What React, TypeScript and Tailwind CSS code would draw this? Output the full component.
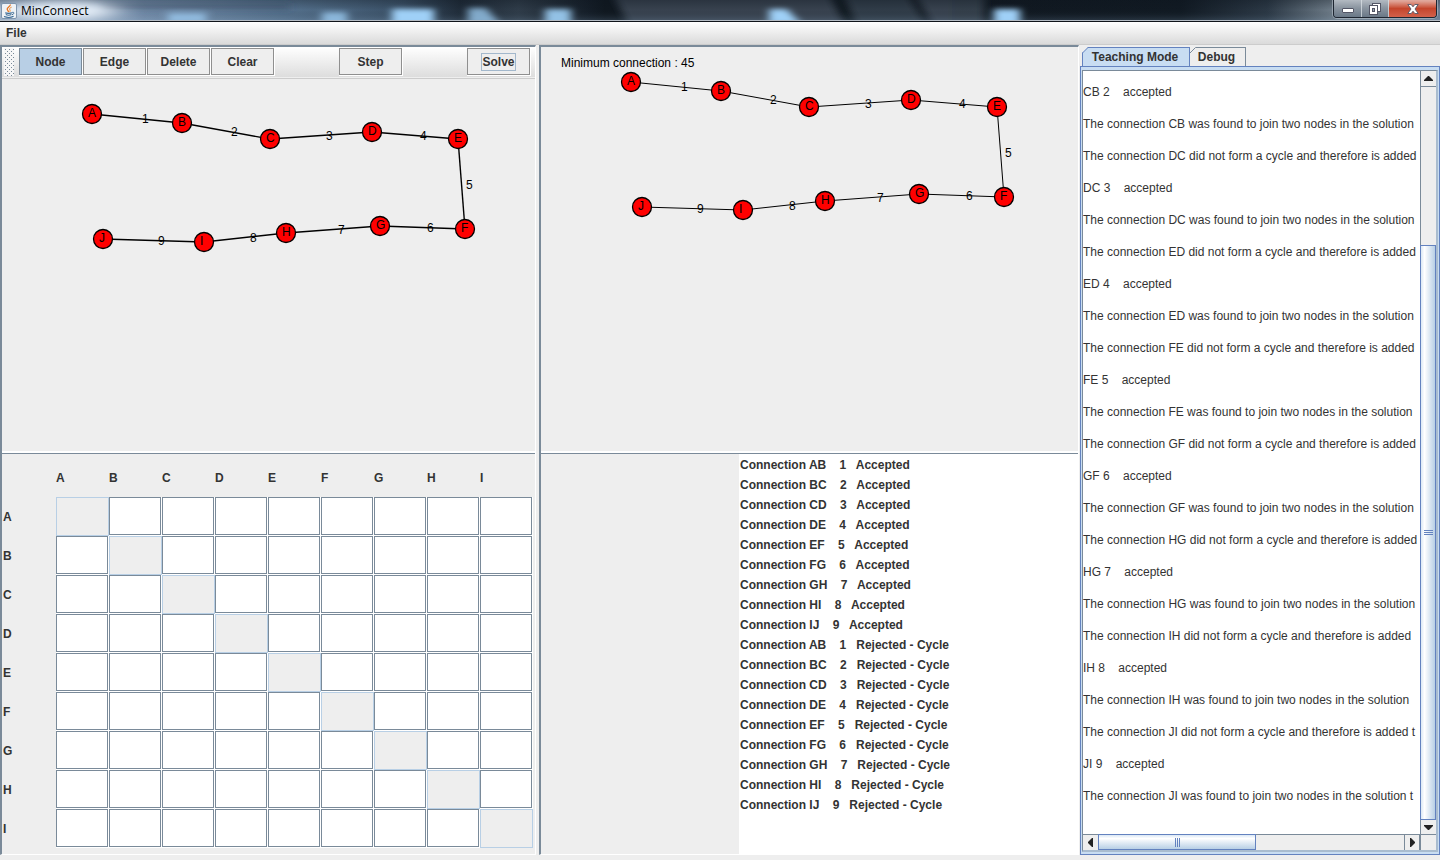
import React from "react";

type Point = { id: string; x: number; y: number };

const NODES: Point[] = [
  { id: "A", x: 92, y: 114 },
  { id: "B", x: 182, y: 123 },
  { id: "C", x: 270, y: 139 },
  { id: "D", x: 372, y: 132 },
  { id: "E", x: 458, y: 139 },
  { id: "F", x: 465, y: 229 },
  { id: "G", x: 380, y: 226 },
  { id: "H", x: 286, y: 233 },
  { id: "I", x: 204, y: 242 },
  { id: "J", x: 103, y: 239 },
];

const COLUMNS = ["A", "B", "C", "D", "E", "F", "G", "H", "I"];
const PAIRS = ["AB", "BC", "CD", "DE", "EF", "FG", "GH", "HI", "IJ"];

const RESULTS = [
  ...PAIRS.map((p, i) => ({ pair: p, weight: i + 1, status: "Accepted" })),
  ...PAIRS.map((p, i) => ({ pair: p, weight: i + 1, status: "Rejected - Cycle" })),
];

const LOG: string[] = [
  "CB 2    accepted",
  "The connection CB was found to join two nodes in the solution",
  "The connection DC did not form a cycle and therefore is added",
  "DC 3    accepted",
  "The connection DC was found to join two nodes in the solution",
  "The connection ED did not form a cycle and therefore is added",
  "ED 4    accepted",
  "The connection ED was found to join two nodes in the solution",
  "The connection FE did not form a cycle and therefore is added",
  "FE 5    accepted",
  "The connection FE was found to join two nodes in the solution",
  "The connection GF did not form a cycle and therefore is added",
  "GF 6    accepted",
  "The connection GF was found to join two nodes in the solution",
  "The connection HG did not form a cycle and therefore is added",
  "HG 7    accepted",
  "The connection HG was found to join two nodes in the solution",
  "The connection IH did not form a cycle and therefore is added",
  "IH 8    accepted",
  "The connection IH was found to join two nodes in the solution",
  "The connection JI did not form a cycle and therefore is added t",
  "JI 9    accepted",
  "The connection JI was found to join two nodes in the solution t",
];

function Graph({ dx, dy, bold, label }: { dx: number; dy: number; bold?: boolean; label: string }) {
  return (
    <svg
      className="block h-full w-full overflow-hidden"
      role="img"
      aria-label={label}
      fontFamily="'Liberation Sans', Arial, sans-serif"
      fontSize="12"
    >
      <g transform={`translate(${dx} ${dy})`}>
        {NODES.slice(1).map((n, i) => (
          <line
            key={n.id}
            x1={NODES[i].x}
            y1={NODES[i].y}
            x2={n.x}
            y2={n.y}
            stroke="#000"
            strokeWidth={bold ? 1.4 : 1}
          />
        ))}
        {NODES.slice(1).map((n, i) => (
          <text key={n.id} x={Math.floor((NODES[i].x + n.x) / 2) + 5} y={Math.floor((NODES[i].y + n.y) / 2) + 5}>
            {i + 1}
          </text>
        ))}
        {NODES.map((n) => (
          <g key={n.id}>
            <circle cx={n.x} cy={n.y} r="9.5" fill="#f00" stroke="#000" strokeWidth="1.3" />
            <text x={n.x - 4} y={n.y + 3}>
              {n.id}
            </text>
          </g>
        ))}
      </g>
    </svg>
  );
}

function TitleGlass() {
  return (
    <svg
      className="absolute inset-0 h-full w-full"
      viewBox="0 0 1440 20"
      preserveAspectRatio="none"
      aria-hidden="true"
    >
      <defs>
        <linearGradient id="glass" x1="0" x2="1" y1="0" y2="0">
          <stop offset="0" stopColor="#9db2ca" />
          <stop offset="0.06" stopColor="#a3b7ce" />
          <stop offset="0.1" stopColor="#7690ae" />
          <stop offset="0.2" stopColor="#54708c" />
          <stop offset="0.28" stopColor="#3a5066" />
          <stop offset="0.32" stopColor="#1f2b38" />
          <stop offset="0.36" stopColor="#2f3c49" />
          <stop offset="0.41" stopColor="#141d27" />
          <stop offset="0.42" stopColor="#101820" />
          <stop offset="0.59" stopColor="#10181f" />
          <stop offset="0.595" stopColor="#10171f" />
          <stop offset="0.82" stopColor="#111a23" />
          <stop offset="0.88" stopColor="#2b3845" />
          <stop offset="0.93" stopColor="#75838f" />
          <stop offset="1" stopColor="#6c8095" />
        </linearGradient>
        <linearGradient id="sheen" x1="0" x2="0" y1="0" y2="1">
          <stop offset="0" stopColor="#0c141d" stopOpacity="0.3" />
          <stop offset="0.5" stopColor="#0c141d" stopOpacity="0" />
          <stop offset="1" stopColor="#7d9ab5" stopOpacity="0.2" />
        </linearGradient>
        <filter id="soft" x="-10%" y="-50%" width="120%" height="200%">
          <feGaussianBlur stdDeviation="4 2.5" />
        </filter>
        <filter id="glow" x="-50%" y="-100%" width="200%" height="300%">
          <feGaussianBlur stdDeviation="14 4" />
        </filter>
      </defs>
      <rect width="1440" height="20" fill="url(#glass)" />
      <g filter="url(#soft)" fill="#37434f">
        <path d="M612 -8H828L846 28H630Z" />
        <path d="M842 -8H906L928 28H858Z" opacity="0.85" />
        <path d="M914 -8H952V28H934Z" />
        <path d="M952 -8H984L984 28H944Z" opacity="0.9" />
      </g>
      <rect width="1440" height="20" fill="url(#sheen)" />
      <g filter="url(#soft)" fill="#9fd0f7">
        <rect x="100" y="3" width="190" height="8" fill="#31465c" opacity="0.35" />
        <rect x="168" y="13" width="38" height="10" opacity="0.7" />
        <rect x="322" y="12" width="25" height="14" opacity="0.75" />
        <rect x="392" y="9" width="42" height="16" />
        <path d="M468 8H486L500 24H468Z" opacity="0.75" />
        <rect x="545" y="9" width="26" height="16" opacity="0.9" />
        <path d="M769 9H787L801 24H769Z" />
        <rect x="994" y="9" width="26" height="16" />
      </g>
      <ellipse cx="60" cy="11" rx="56" ry="9" fill="#e4edf7" filter="url(#glow)" />
    </svg>
  );
}

function TitleBar() {
  return (
    <header className="relative flex h-[22px] shrink-0 items-start justify-between overflow-hidden border-b border-[#11151b] bg-[#b5bcc4]">
      <div className="absolute inset-x-0 top-0 h-5">
        <TitleGlass />
      </div>
      <div className="relative flex h-[22px] items-center gap-1 pl-px">
        <svg className="h-4 w-4" viewBox="0 0 16 16" aria-hidden="true">
          <rect x="0.5" y="0.5" width="15" height="15" rx="1.5" fill="#eef2f6" stroke="#7f95ad" />
          <path d="M9.3 1.5C9.8 3.6 5.8 4.4 6.2 6.2C6.4 7.3 7.7 8 7.4 9.2" fill="none" stroke="#e8731c" strokeWidth="1.3" />
          <path d="M10.6 4.2C8.6 5 8.2 5.8 8.9 6.8C9.4 7.6 9 8.4 8.6 9" fill="none" stroke="#f08a2c" strokeWidth="1" />
          <path d="M4.2 9.8C5.6 10.6 9.6 10.5 11 9.8M4.8 11.6C6.4 12.4 9 12.3 10.4 11.6M3 13.6C5.8 14.6 10.4 14.4 12.6 13.3" fill="none" stroke="#3d6c96" strokeWidth="1.1" />
          <path d="M11.2 9.4C13.4 8.7 13.6 11 11 11.7" fill="none" stroke="#3d6c96" strokeWidth="1" />
        </svg>
        <h1 className="font-['Open_Sans','Noto_Sans',sans-serif] text-[12px] leading-4 text-black">MinConnect</h1>
      </div>
      <div className="relative mr-[3px] flex h-[18px] overflow-hidden rounded-b-[4px] border border-t-0 border-[#1d2530] ring-1 ring-[#b7c1cb]/60">
        <button
          type="button"
          aria-label="Minimize"
          className="flex w-7 items-center justify-center border-r border-[#e0e5ea]/70 bg-linear-to-b from-[#b3bac2] via-[#8c96a1] via-45% to-[#6a7887]"
        >
          <svg className="h-3 w-3" viewBox="0 0 12 12" aria-hidden="true">
            <rect x="0.5" y="5.5" width="11" height="4" rx="0.5" fill="#fff" stroke="#535666" />
          </svg>
        </button>
        <button
          type="button"
          aria-label="Restore"
          className="flex w-[27px] items-center justify-center border-r border-[#e0e5ea]/70 bg-linear-to-b from-[#b3bac2] via-[#8c96a1] via-45% to-[#6a7887]"
        >
          <svg className="h-3 w-3" viewBox="0 0 12 12" aria-hidden="true">
            <rect x="3.5" y="0.5" width="8" height="8" fill="#fff" stroke="#535666" />
            <rect x="0.5" y="2.5" width="8" height="9" fill="#fff" stroke="#535666" />
            <rect x="3.5" y="5.5" width="2" height="3" fill="#9aa5b1" stroke="#535666" />
          </svg>
        </button>
        <button
          type="button"
          aria-label="Close"
          className="flex w-[47px] items-center justify-center bg-linear-to-b from-[#e0a79b] from-5% via-[#c4452c] via-50% to-[#d2604a]"
        >
          <svg className="h-3 w-3" viewBox="0 0 12 12" aria-hidden="true">
            <path
              d="M0.8 1.5H4.2L6 3.8L7.8 1.5H11.2L8 6L11.2 10.5H7.8L6 8.2L4.2 10.5H0.8L4 6Z"
              fill="#fff"
              stroke="#535666"
              strokeWidth="0.9"
            />
          </svg>
        </button>
      </div>
    </header>
  );
}

function ToolButton({ children, active, focused }: { children: string; active?: boolean; focused?: boolean }) {
  return (
    <span className="w-16 border-r border-b border-white">
      <button
        type="button"
        aria-pressed={active ? true : undefined}
        className={`flex h-[27px] w-full items-center justify-center border pt-px text-[12px] font-bold ${
          active ? "border-[#7a8a99] bg-[#b8cfe5]" : "border-[#8f8f8f] bg-[#eeeeee]"
        }`}
      >
        {focused ? <span className="border border-[#a3b8cc] leading-4">{children}</span> : children}
      </button>
    </span>
  );
}

function Toolbar() {
  return (
    <div role="toolbar" aria-label="Graph tools" className="border-b border-[#cccccc]">
      <div className="flex border-b border-[#eeeeee] bg-linear-to-b from-white to-[#dddddd] pt-px pb-px pl-[2px]">
        <svg className="mr-[5px] h-[28px] w-[10px]" aria-hidden="true">
          <defs>
            <pattern id="bumps" width="4" height="4" patternUnits="userSpaceOnUse">
              <rect x="1" y="1" width="1" height="1" fill="#7a8a99" />
              <rect x="3" y="3" width="1" height="1" fill="#7a8a99" />
            </pattern>
          </defs>
          <rect width="10" height="28" fill="#f6f6f6" />
          <rect width="10" height="28" fill="url(#bumps)" />
        </svg>
        <ToolButton active>Node</ToolButton>
        <ToolButton>Edge</ToolButton>
        <ToolButton>Delete</ToolButton>
        <ToolButton>Clear</ToolButton>
        <div className="w-16" />
        <ToolButton>Step</ToolButton>
        <div className="w-16" />
        <ToolButton focused>Solve</ToolButton>
      </div>
    </div>
  );
}

function Matrix() {
  return (
    <table className="w-full table-fixed border-collapse text-[12px] font-bold">
      <thead>
        <tr className="h-[43px]">
          <td className="w-[54px] p-0" />
          {COLUMNS.map((c) => (
            <th key={c} scope="col" className="p-0 pt-1 text-left">
              {c}
            </th>
          ))}
        </tr>
      </thead>
      <tbody>
        {COLUMNS.map((r) => (
          <tr key={r} className="h-[39px]">
            <th scope="row" className="p-0 pl-px text-left">
              {r}
            </th>
            {COLUMNS.map((c) =>
              r === c ? (
                <td key={c} className="p-0">
                  <input
                    disabled
                    aria-label={`${r} to ${c}`}
                    className="block h-[39px] w-full border border-[#b8cfe5] bg-[#eeeeee]"
                  />
                </td>
              ) : (
                <td key={c} className="bg-white p-0 pr-px pb-px">
                  <input
                    aria-label={`${r} to ${c}`}
                    className="block h-[38px] w-full border border-[#7a8a99] bg-white px-1 font-normal outline-none"
                  />
                </td>
              ),
            )}
          </tr>
        ))}
      </tbody>
    </table>
  );
}

function Arrow({ d }: { d: string }) {
  return (
    <svg className="h-[9px] w-[9px]" viewBox="0 0 9 9" aria-hidden="true">
      <path d={d} fill="#222" />
    </svg>
  );
}

const scrollButton = "flex shrink-0 items-center justify-center bg-[#eeeeee] border-[#7a8a99]";

function LogPanel() {
  return (
    <section className="flex min-h-0 min-w-0 flex-col pt-[2px]">
      <div role="tablist" className="flex h-[19px] shrink-0 pl-[2px] text-[12px] font-bold">
        <button
          type="button"
          role="tab"
          aria-selected="true"
          className="relative flex w-[108px] items-center justify-center border border-b-0 border-[#6382bf] bg-[#c8ddf2] pr-[2px]"
        >
          <svg className="absolute -top-px -left-px h-[6px] w-[6px]" viewBox="0 0 6 6" aria-hidden="true">
            <path d="M0 0H6L0 6Z" fill="#eeeeee" />
            <path d="M0.5 6L6 0.5" stroke="#6382bf" />
          </svg>
          Teaching Mode
        </button>
        <button
          type="button"
          role="tab"
          aria-selected="false"
          className="relative flex w-14 items-center justify-center border border-b-0 border-l-0 border-[#7a8a99] bg-[#eeeeee] pr-[2px]"
        >
          <svg className="absolute -top-px left-0 h-[6px] w-[6px]" viewBox="0 0 6 6" aria-hidden="true">
            <path d="M0 0H6L0 6Z" fill="#eeeeee" />
            <path d="M0 6L5.5 0.5" stroke="#7a8a99" />
          </svg>
          Debug
        </button>
      </div>
      <div className="flex min-h-0 flex-1 flex-col border border-[#6382bf] bg-[#c8ddf2] px-px pt-[3px] pb-[2px]">
        <div className="grid min-h-0 flex-1 grid-cols-[minmax(0,1fr)_16px] grid-rows-[minmax(0,1fr)_16px] border border-r-2 border-b-2 border-[#7a8a99] border-r-[#a9bccf] border-b-[#a9bccf] bg-[#eeeeee]">
          <div role="log" className="min-h-0 overflow-hidden bg-white pt-[5px] text-[12px] leading-8 whitespace-pre">
            {LOG.map((line) => (
              <p key={line}>{line}</p>
            ))}
          </div>
          <div className="flex min-h-0 flex-col border-l border-[#7a8a99] bg-[#eeeeee]">
            <button type="button" aria-label="Scroll up" className={`${scrollButton} h-4 border-b`}>
              <Arrow d="M4 2H5L9 6V7H0V6Z" />
            </button>
            <div className="basis-0 grow-[159]" />
            <div className="-ml-px flex basis-0 grow-[575] items-center justify-center border border-[#6382bf] bg-linear-to-r from-[#dbe8f5] via-white via-25% to-[#b8cfe5]">
              <div className="flex w-[9px] flex-col gap-px">
                <i className="h-px bg-[#6382bf]" />
                <i className="h-px bg-[#6382bf]" />
                <i className="h-px bg-[#6382bf]" />
              </div>
            </div>
            <button type="button" aria-label="Scroll down" className={`${scrollButton} h-[14px]`}>
              <Arrow d="M4 7H5L9 3V2H0V3Z" />
            </button>
          </div>
          <div className="flex min-w-0 border-t border-[#7a8a99] bg-[#eeeeee]">
            <button type="button" aria-label="Scroll left" className={`${scrollButton} w-[15px]`}>
              <Arrow d="M2 4V5L6 9H7V0H6Z" />
            </button>
            <div className="-mt-px flex basis-0 grow-[158] items-center justify-center border border-[#6382bf] bg-linear-to-b from-[#dbe8f5] via-white via-25% to-[#b8cfe5]">
              <div className="flex h-[9px] gap-px">
                <i className="w-px bg-[#6382bf]" />
                <i className="w-px bg-[#6382bf]" />
                <i className="w-px bg-[#6382bf]" />
              </div>
            </div>
            <div className="basis-0 grow-[149]" />
            <button type="button" aria-label="Scroll right" className={`${scrollButton} w-4 border-x`}>
              <Arrow d="M7 4V5L3 9H2V0H3Z" />
            </button>
          </div>
          <div className="border-t border-l border-[#7a8a99]" />
        </div>
      </div>
    </section>
  );
}

export default function App() {
  return (
    <div className="flex h-screen flex-col bg-[#eeeeee] pb-[5px] font-['Liberation_Sans',Arial,sans-serif] text-[#333333]">
      <TitleBar />
      <nav className="flex h-[23px] shrink-0 items-center border-b border-[#cccccc] bg-linear-to-b from-white to-[#dadada] px-[6px] pb-px text-[12px] font-bold">
        <button type="button">File</button>
      </nav>
      <main className="grid min-h-0 flex-1 grid-cols-[minmax(0,539fr)_minmax(0,541fr)_minmax(0,360fr)]">
        <section className="mr-[3px] flex min-h-0 flex-col border-t-2 border-r border-b border-l-2 border-[#7a8a99] border-r-white border-b-white">
          <Toolbar />
          <div className="min-h-0 flex-1 border-b-2 border-white">
            <Graph dx={-2} dy={-79} bold label="Graph editor" />
          </div>
          <div className="h-[401px] shrink-0 border-t border-[#7a8a99] pr-[2px]">
            <Matrix />
          </div>
        </section>
        <section className="mr-px flex min-h-0 flex-col border-t-2 border-r border-b border-l-2 border-[#7a8a99] border-r-white border-b-white">
          <div className="flex min-h-0 flex-1 flex-col border-b-2 border-white text-black">
            <p className="h-6 shrink-0 pt-2 pl-5 text-[12px] leading-4">Minimum connection : 45</p>
            <div className="min-h-0 flex-1">
              <Graph dx={-2} dy={-103} label="Minimum spanning tree" />
            </div>
          </div>
          <div className="grid h-[401px] shrink-0 grid-cols-[minmax(0,198fr)_minmax(0,339fr)] border-t border-[#7a8a99]">
            <div />
            <ul className="overflow-hidden bg-white pt-px pl-px text-[12px] leading-5 font-bold whitespace-pre">
              {RESULTS.map((r) => (
                <li key={r.pair + r.status}>{`Connection ${r.pair}    ${r.weight}   ${r.status}`}</li>
              ))}
            </ul>
          </div>
        </section>
        <LogPanel />
      </main>
    </div>
  );
}
